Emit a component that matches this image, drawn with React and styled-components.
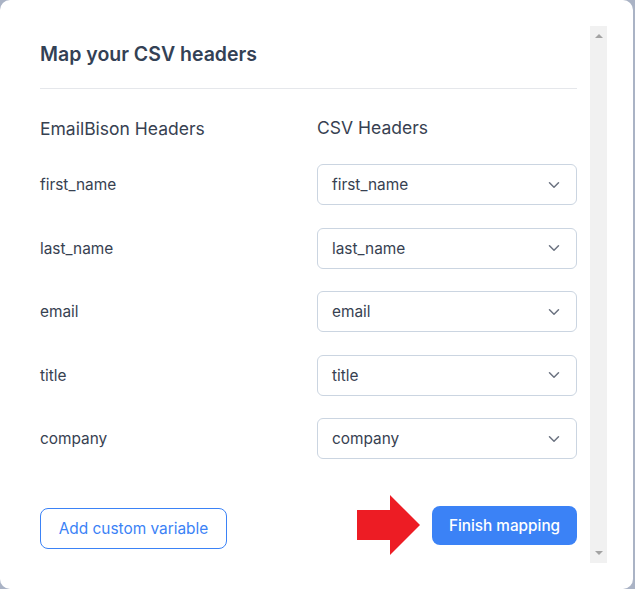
import React from 'react';
import styled, { createGlobalStyle } from 'styled-components';

const fields = ['first_name', 'last_name', 'email', 'title', 'company'];

const App = () => {
    return (
        <>
            <Global />
            <Modal>
                <Body>
                    <Title>Map your CSV headers</Title>
                    <Divider />
                    <Grid>
                        <ColHead>EmailBison Headers</ColHead>
                        <ColHead>CSV Headers</ColHead>
                        {fields.map((f) => (
                            <React.Fragment key={f}>
                                <Label>{f}</Label>
                                <Select>
                                    <span>{f}</span>
                                    <Chevron />
                                </Select>
                            </React.Fragment>
                        ))}
                    </Grid>
                    <Footer>
                        <OutlineButton>Add custom variable</OutlineButton>
                        <Right>
                            <Arrow />
                            <PrimaryButton>Finish mapping</PrimaryButton>
                        </Right>
                    </Footer>
                </Body>
                <ScrollTrack>
                    <TriUp />
                    <TriDown />
                </ScrollTrack>
            </Modal>
        </>
    );
};

export default App;

const Chevron = () => (
    <svg width="12" height="8" viewBox="0 0 12 8" fill="none">
        <path d="M1.5 1.8 L6 6.2 L10.5 1.8" stroke="#6b7280" strokeWidth="1.5" strokeLinecap="round" strokeLinejoin="round" />
    </svg>
);

const Arrow = () => (
    <svg width="63" height="60" viewBox="0 0 63 60">
        <polygon points="0,15 33,15 33,0 63,30 33,60 33,45 0,45" fill="#ed1c24" />
    </svg>
);

const Global = createGlobalStyle`
    html, body {
        margin: 0;
        padding: 0;
        background: #aab3c5;
    }
    body {
        font-family: Inter, "Noto Sans", sans-serif;
    }
`;

const Modal = styled.div`
    width: 633px;
    height: 589px;
    box-sizing: border-box;
    background: #ffffff;
    border-radius: 10px;
    display: flex;
    flex-direction: row;
    padding: 26px 26px 26px 0;
`;

const Body = styled.div`
    flex: 1;
    padding: 14px 13px 0 40px;
    display: flex;
    flex-direction: column;
`;

const Title = styled.h2`
    margin: 0;
    font-size: 19.5px;
    line-height: 28px;
    font-weight: 600;
    color: #334155;
`;

const Divider = styled.div`
    height: 1px;
    background: #e5e7eb;
    margin-top: 20px;
`;

const Grid = styled.div`
    display: grid;
    grid-template-columns: 277px 260px;
    row-gap: 22.5px;
    align-items: center;
    margin-top: 27px;
    & > :nth-child(2) {
        margin-bottom: 1.5px;
    }
`;

const ColHead = styled.div`
    font-size: 17.5px;
    line-height: 24px;
    color: #374151;
`;

const Label = styled.div`
    font-size: 15.4px;
    color: #374151;
`;

const Select = styled.div`
    height: 41px;
    box-sizing: border-box;
    border: 1px solid #cbd5e1;
    border-radius: 6px;
    padding: 0 16px 0 14px;
    display: flex;
    align-items: center;
    justify-content: space-between;
    font-size: 15.4px;
    color: #374151;
`;

const Footer = styled.div`
    margin-top: 36px;
    display: flex;
    align-items: center;
    justify-content: space-between;
`;

const Right = styled.div`
    display: flex;
    align-items: center;
    gap: 12px;
`;

const OutlineButton = styled.button`
    margin-top: 6px;
    height: 41px;
    width: 187px;
    border: 1px solid #3b82f6;
    border-radius: 8px;
    background: #ffffff;
    color: #3b82f6;
    font-family: Inter, sans-serif;
    font-size: 15.4px;
`;

const PrimaryButton = styled.button`
    height: 39px;
    width: 145px;
    border: 0;
    border-radius: 8px;
    background: #3b82f6;
    color: #ffffff;
    font-family: Inter, sans-serif;
    font-size: 15.3px;
    font-weight: 500;
`;

const ScrollTrack = styled.div`
    width: 17px;
    background: #f1f1f1;
    display: flex;
    flex-direction: column;
    justify-content: space-between;
    align-items: center;
    padding: 8px 0;
`;

const TriUp = styled.div`
    width: 0;
    height: 0;
    border-left: 4px solid transparent;
    border-right: 4px solid transparent;
    border-bottom: 4px solid #a3a3a3;
`;

const TriDown = styled.div`
    width: 0;
    height: 0;
    border-left: 4px solid transparent;
    border-right: 4px solid transparent;
    border-top: 4px solid #a3a3a3;
`;
